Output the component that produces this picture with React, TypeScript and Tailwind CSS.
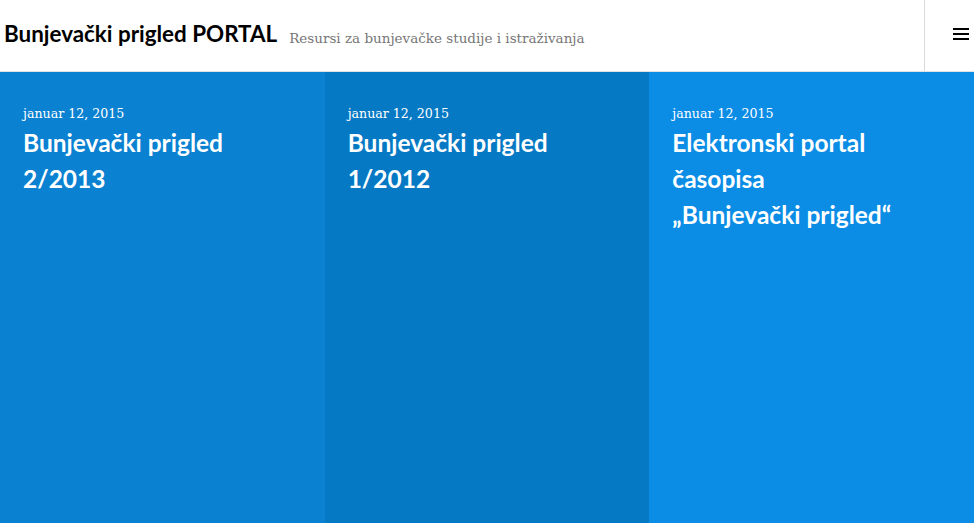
import React from "react";

const posts = [
  { bg: "bg-[#0a81d1]", title: ["Bunjevački prigled", "2/2013"] },
  { bg: "bg-[#0679c4]", title: ["Bunjevački prigled", "1/2012"] },
  { bg: "bg-[#0b8de6]", title: ["Elektronski portal", "časopisa", "„Bunjevački prigled“"] },
];

export default function App() {
  return (
    <div className="w-[974px] h-[523px] overflow-hidden bg-white flex flex-col">
      <header className="h-[72px] shrink-0 flex border-b border-[#e2e2e2] bg-white">
        <div className="flex-1 flex items-center pl-[4px] gap-[12px]">
          <span className="text-[22.4px] font-bold text-black mb-[3px]" style={{ fontFamily: "Lato, sans-serif" }}>
            Bunjevački prigled PORTAL
          </span>
          <span className="text-[13.5px] text-[#767676] mt-[5px]" style={{ fontFamily: "'DejaVu Serif', serif" }}>
            Resursi za bunjevačke studije i istraživanja
          </span>
        </div>
        <div className="w-[50px] border-l border-[#d9d9d9] flex items-center justify-center pl-[22px]">
          <div className="flex flex-col gap-[3px] w-[16px] mb-[4px]">
            <div className="h-[2px] bg-black" />
            <div className="h-[2px] bg-black" />
            <div className="h-[2px] bg-black" />
          </div>
        </div>
      </header>
      <main className="flex-1 grid grid-cols-3">
        {posts.map((p, i) => (
          <article key={i} className={`${p.bg} pl-[23px] pt-[30px] text-white`}>
            <div className="text-[12.6px] leading-[24px]" style={{ fontFamily: "'DejaVu Serif', serif" }}>
              januar 12, 2015
            </div>
            <h2 className="text-[24.5px] font-bold leading-[36px] mt-[-1px]" style={{ fontFamily: "Lato, sans-serif" }}>
              {p.title.map((t, j) => (
                <div key={j}>{t}</div>
              ))}
            </h2>
          </article>
        ))}
      </main>
    </div>
  );
}
